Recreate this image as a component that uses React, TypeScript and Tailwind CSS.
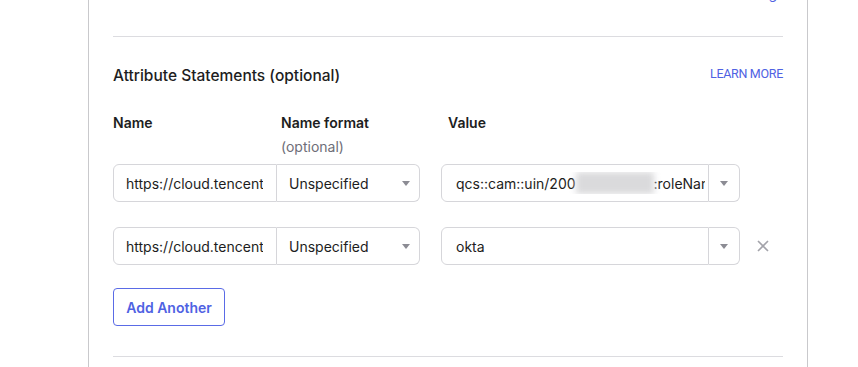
import React from 'react';

const blue = 'text-[#4f62e3]';

function Caret() {
  return (
    <svg width="8" height="5" viewBox="0 0 8 5">
      <polygon points="0,0 8,0 4,5" fill="#8c8c94" />
    </svg>
  );
}

function Row({ name, value, removable }: { name: string; value: React.ReactNode; removable?: boolean }) {
  return (
    <div className="flex items-center h-[38px]">
      <div className="flex w-[307px] h-[38px]">
        <div className="w-[164px] h-full border border-[#d6d6da] rounded-l-[6px] flex items-center pl-[12px] pr-[13px] text-[14px] text-[#1d1d21]">
          <div className="flex-1 overflow-hidden whitespace-nowrap">{name}</div>
        </div>
        <div className="w-[143px] h-full border border-l-0 border-[#d6d6da] rounded-r-[6px] flex items-center justify-between pl-[12px] pr-[9px] text-[14px] text-[#1d1d21]">
          <span>Unspecified</span>
          <Caret />
        </div>
      </div>
      <div className="flex ml-[21px] w-[299px] h-[38px]">
        <div className="w-[268px] h-full border border-[#d6d6da] rounded-l-[6px] flex items-center pl-[14px] pr-[3px] text-[14px] text-[#1d1d21]">
          <div className="flex-1 flex items-center overflow-hidden whitespace-nowrap">{value}</div>
        </div>
        <div className="w-[31px] h-full border border-l-0 border-[#d6d6da] rounded-r-[6px] flex items-center justify-center">
          <Caret />
        </div>
      </div>
      {removable && (
        <svg className="ml-[17px]" width="12" height="12" viewBox="0 0 12 12">
          <path d="M1 1L11 11M11 1L1 11" stroke="#a3a3aa" strokeWidth="1.6" />
        </svg>
      )}
    </div>
  );
}

export default function App() {
  return (
    <div className="w-[858px] h-[367px] bg-white overflow-hidden font-['Inter',sans-serif]">
      <div className="ml-[88px] w-[720px] h-full border-x border-[#c9c9cc] px-[24px]">
        <div className="h-[36px] overflow-hidden">
          <div className={`-mt-[14px] text-right pr-[6px] text-[14px] leading-[16px] ${blue}`}>Show advanced setting</div>
        </div>
        <div className="border-t border-[#dcdce0]" />

        <div className="mt-[27px] flex justify-between items-start">
          <h2 className="text-[15.5px] leading-[24px] text-[#1d1d21] font-medium">Attribute Statements (optional)</h2>
          <a className={`mt-[2px] text-[12.5px] leading-[16px] tracking-[-0.3px] font-['Roboto',sans-serif] ${blue}`}>LEARN MORE</a>
        </div>

        <div className="mt-[25px] flex text-[14px] leading-[20px]">
          <div className="w-[168px] font-semibold text-[#1d1d21]">Name</div>
          <div className="w-[167px]">
            <div className="font-semibold text-[#1d1d21]">Name format</div>
            <div className="text-[#6e6e78] mt-[4px]">(optional)</div>
          </div>
          <div className="font-semibold text-[#1d1d21]">Value</div>
        </div>

        <div className="mt-[7px]">
          <Row
            name="https://cloud.tencent.com/SAML/Attributes/Role"
            value={
              <>
                <span className="shrink-0">qcs::cam::uin/200</span>
                <span className="shrink-0 inline-block w-[78px] h-[22px] bg-[#dadadc] blur-[3px]" />
                <span className="shrink-0">:roleName/okta</span>
              </>
            }
          />
        </div>
        <div className="mt-[25px]">
          <Row name="https://cloud.tencent.com/SAML/Attributes/RoleSessionName" value="okta" removable />
        </div>

        <button className={`mt-[23px] w-[112px] h-[38px] border border-[#5a6be6] rounded-[4px] text-[14px] font-semibold ${blue}`}>
          Add Another
        </button>

        <div className="mt-[30px] border-t border-[#dcdce0]" />
      </div>
    </div>
  );
}
